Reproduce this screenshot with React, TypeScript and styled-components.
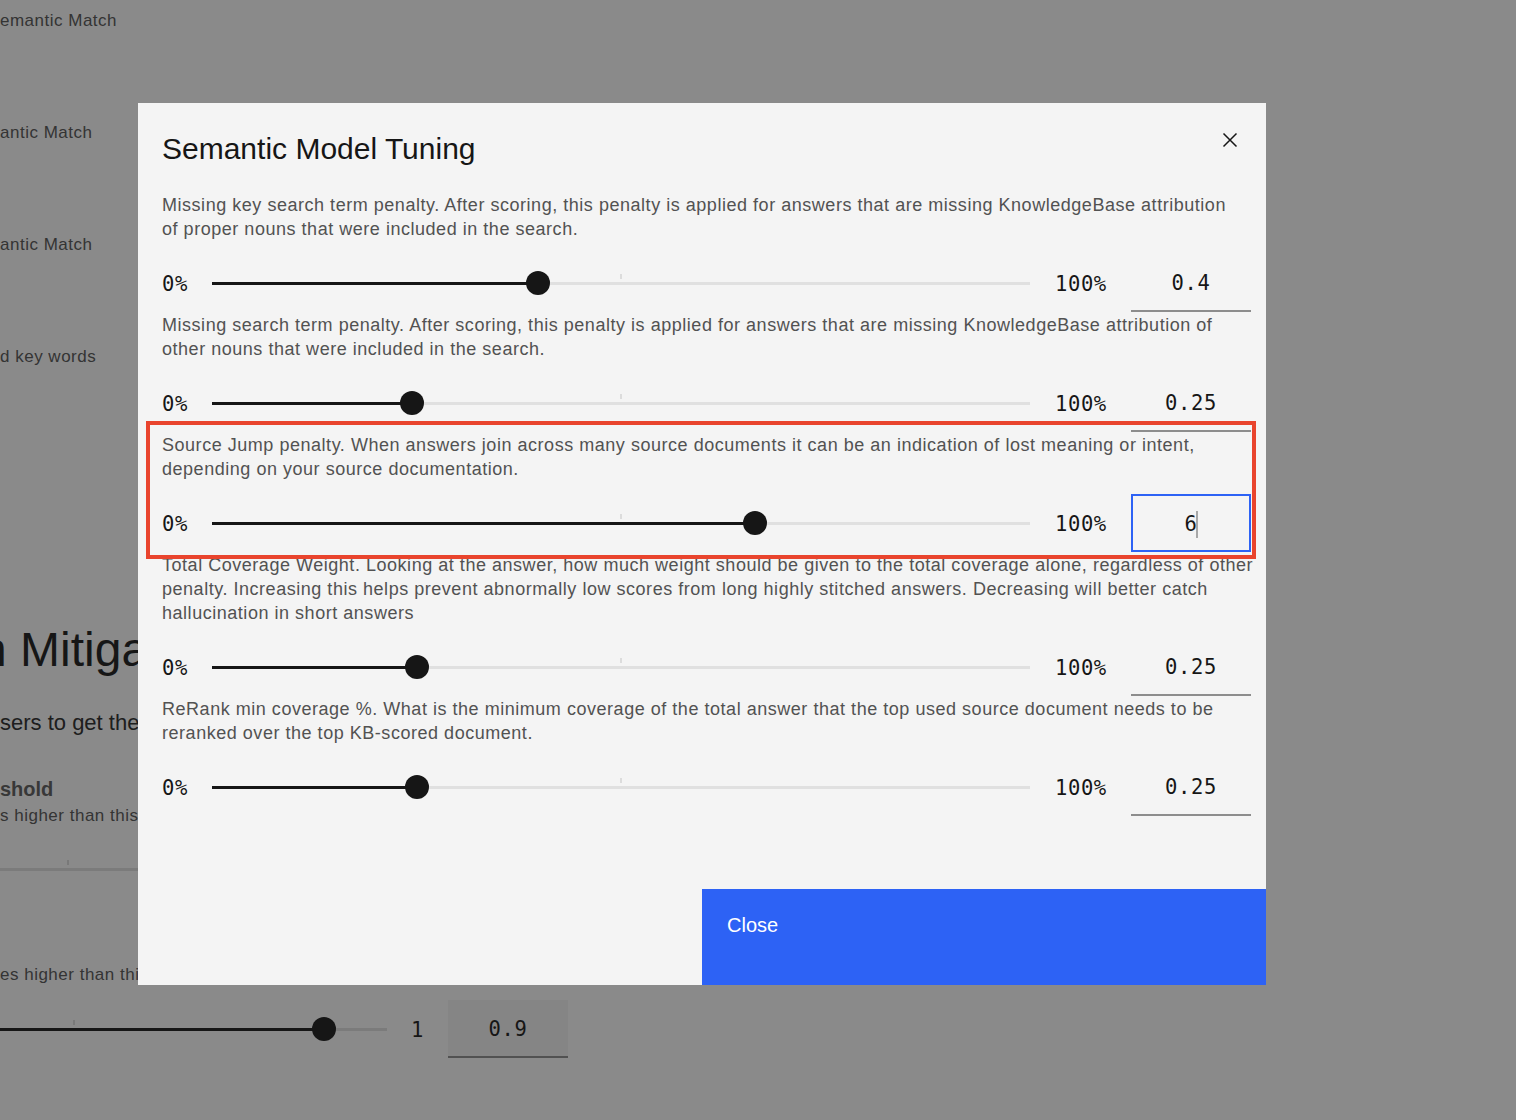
import React from "react";
import styled, { createGlobalStyle, css } from "styled-components";

const sans = `"Liberation Sans", Arial, sans-serif`;
const mono = `"DejaVu Sans Mono", "Liberation Mono", monospace`;

const GlobalStyle = createGlobalStyle`
  html, body {
    margin: 0;
    padding: 0;
    background: #ffffff;
  }
  body {
    font-family: ${sans};
    overflow: hidden;
  }
  * {
    box-sizing: border-box;
  }
`;

type Setting = {
  lines: string[];
  value: string;
  pct: number;
  focused?: boolean;
};

const settings: Setting[] = [
  {
    lines: [
      "Missing key search term penalty. After scoring, this penalty is applied for answers that are missing KnowledgeBase attribution",
      "of proper nouns that were included in the search.",
    ],
    value: "0.4",
    pct: 0.399,
  },
  {
    lines: [
      "Missing search term penalty. After scoring, this penalty is applied for answers that are missing KnowledgeBase attribution of",
      "other nouns that were included in the search.",
    ],
    value: "0.25",
    pct: 0.245,
  },
  {
    lines: [
      "Source Jump penalty. When answers join across many source documents it can be an indication of lost meaning or intent,",
      "depending on your source documentation.",
    ],
    value: "6",
    pct: 0.664,
    focused: true,
  },
  {
    lines: [
      "Total Coverage Weight. Looking at the answer, how much weight should be given to the total coverage alone, regardless of other",
      "penalty. Increasing this helps prevent abnormally low scores from long highly stitched answers. Decreasing will better catch",
      "hallucination in short answers",
    ],
    value: "0.25",
    pct: 0.251,
  },
  {
    lines: [
      "ReRank min coverage %. What is the minimum coverage of the total answer that the top used source document needs to be",
      "reranked over the top KB-scored document.",
    ],
    value: "0.25",
    pct: 0.251,
  },
];

export default function App() {
  return (
    <>
      <GlobalStyle />
      <Page>
        <PageLabel $gap={9}>emantic Match</PageLabel>
        <PageLabel $gap={88}>antic Match</PageLabel>
        <PageLabel $gap={88}>antic Match</PageLabel>
        <PageLabel $gap={88}>d key words</PageLabel>
        <PageHeading>n Mitigation</PageHeading>
        <PageLead>sers to get the</PageLead>
        <PageSubhead>shold</PageSubhead>
        <PageLabel $gap={1}>s higher than this</PageLabel>
        <PageSliderRow $gap={29} $height={24}>
          <Track $width={626} $offset={-245} />
        </PageSliderRow>
        <PageLabel $gap={82}>es higher than this</PageLabel>
        <PageSliderRow $gap={13} $height={58}>
          <Track $width={626} $offset={-239}>
            <Filled style={{ width: "89.9%" }} />
            <Thumb style={{ left: "89.9%" }} />
          </Track>
          <RangeLabel $width={13} $left={24}>
            1
          </RangeLabel>
          <ValueBox $left={24} $filled>
            0.9
          </ValueBox>
        </PageSliderRow>
      </Page>

      <Overlay>
        <Modal role="dialog" aria-label="Semantic Model Tuning">
          <Header>
            <Title>Semantic Model Tuning</Title>
            <IconButton aria-label="Close">
              <svg width="16" height="16" viewBox="0 0 16 16" fill="none">
                <path
                  d="M1.5 1.5 L14.5 14.5 M14.5 1.5 L1.5 14.5"
                  stroke="#161616"
                  strokeWidth="1.5"
                />
              </svg>
            </IconButton>
          </Header>

          <Body>
            {settings.map((s, i) => (
              <SettingBlock key={i} $highlight={s.focused}>
                <Description>
                  {s.lines.map((line) => (
                    <Line key={line}>{line}</Line>
                  ))}
                </Description>
                <SliderRow>
                  <RangeLabel $width={50}>0%</RangeLabel>
                  <Track $width={818}>
                    <Filled style={{ width: `${s.pct * 100}%` }} />
                    <Thumb style={{ left: `${s.pct * 100}%` }} />
                  </Track>
                  <RangeLabel $width={51} $left={25}>
                    100%
                  </RangeLabel>
                  <ValueBox $left={25} $focused={s.focused}>
                    {s.value}
                    {s.focused && <Caret />}
                  </ValueBox>
                </SliderRow>
              </SettingBlock>
            ))}
          </Body>

          <Footer>
            <CloseButton>Close</CloseButton>
          </Footer>
        </Modal>
      </Overlay>
    </>
  );
}

/* page behind the dialog */

const Page = styled.div`
  width: 1516px;
  height: 1120px;
  overflow: hidden;
  background: #ffffff;
  display: flex;
  flex-direction: column;
  align-items: flex-start;
`;

const PageLabel = styled.div<{ $gap: number }>`
  margin-top: ${(p) => p.$gap}px;
  font-size: 17px;
  line-height: 24px;
  letter-spacing: 0.5px;
  color: #525252;
  white-space: nowrap;
`;

const PageHeading = styled.h1`
  margin: 253px 0 0 -20px;
  font-size: 48px;
  line-height: 56px;
  font-weight: 400;
  color: #161616;
  white-space: nowrap;
`;

const PageLead = styled.p`
  margin: 30px 0 0;
  font-size: 22px;
  line-height: 30px;
  color: #262626;
  white-space: nowrap;
`;

const PageSubhead = styled.h3`
  margin: 37px 0 0;
  font-size: 20px;
  line-height: 28px;
  font-weight: 700;
  color: #5a5a5a;
  white-space: nowrap;
`;

const PageSliderRow = styled.div<{ $gap: number; $height: number }>`
  margin-top: ${(p) => p.$gap}px;
  height: ${(p) => p.$height}px;
  display: flex;
  align-items: center;
`;

/* dialog */

const Overlay = styled.div`
  position: fixed;
  inset: 0;
  background: rgba(22, 22, 22, 0.5);
  padding: 103px 0 0 138px;
`;

const Modal = styled.div`
  width: 1128px;
  height: 882px;
  background: #f4f4f4;
  display: flex;
  flex-direction: column;
`;

const Header = styled.header`
  display: flex;
  justify-content: space-between;
  align-items: flex-start;
  padding: 26px 20px 0 24px;
`;

const Title = styled.h2`
  margin: 0;
  font-size: 30px;
  line-height: 40px;
  font-weight: 400;
  color: #161616;
`;

const IconButton = styled.button`
  width: 32px;
  height: 32px;
  margin-top: -5px;
  padding: 0;
  border: none;
  background: transparent;
  display: flex;
  align-items: center;
  justify-content: center;
  cursor: pointer;
`;

const Body = styled.div`
  margin-top: 23px;
  padding: 0 15px 0 24px;
  display: flex;
  flex-direction: column;
`;

const SettingBlock = styled.section<{ $highlight?: boolean }>`
  position: relative;

  ${(p) =>
    p.$highlight &&
    css`
      &::after {
        content: "";
        position: absolute;
        inset: -11px -5px -7px -16px;
        border: 4px solid #e9442d;
        pointer-events: none;
        z-index: 2;
      }
    `}
`;

const Description = styled.p`
  margin: 0;
  padding-top: 1px;
  font-size: 18px;
  line-height: 24px;
  letter-spacing: 0.53px;
  color: #525252;
`;

const Line = styled.span`
  display: block;
  white-space: nowrap;
`;

const SliderRow = styled.div`
  margin-top: 13px;
  height: 58px;
  display: flex;
  align-items: center;
`;

const RangeLabel = styled.span<{ $width: number; $left?: number }>`
  flex-shrink: 0;
  width: ${(p) => p.$width}px;
  margin-left: ${(p) => p.$left ?? 0}px;
  padding-top: 2px;
  font-family: ${mono};
  font-size: 20.5px;
  line-height: 24px;
  letter-spacing: 0.6px;
  color: #161616;
  white-space: nowrap;
`;

const Track = styled.div<{ $width: number; $offset?: number }>`
  position: relative;
  flex-shrink: 0;
  width: ${(p) => p.$width}px;
  margin-left: ${(p) => p.$offset ?? 0}px;
  height: 3px;
  background: #e0e0e0;

  &::before {
    content: "";
    position: absolute;
    left: 50%;
    top: -8px;
    width: 2px;
    height: 5px;
    margin-left: -1px;
    background: #dcdcdc;
  }
`;

const Filled = styled.div`
  position: absolute;
  left: 0;
  top: 0;
  height: 100%;
  background: #161616;
`;

const Thumb = styled.div`
  position: absolute;
  top: 50%;
  width: 24px;
  height: 24px;
  border-radius: 50%;
  background: #161616;
  transform: translate(-50%, -50%);
`;

const ValueBox = styled.div<{ $left?: number; $focused?: boolean; $filled?: boolean }>`
  flex-shrink: 0;
  width: 120px;
  height: 58px;
  margin-left: ${(p) => p.$left ?? 0}px;
  padding-top: 2px;
  display: flex;
  align-items: center;
  justify-content: center;
  background: ${(p) => (p.$filled ? "#f4f4f4" : "transparent")};
  border-bottom: 2px solid #8d8d8d;
  font-family: ${mono};
  font-size: 20.5px;
  letter-spacing: 0.6px;
  color: #161616;

  ${(p) =>
    p.$focused &&
    css`
      border: 2px solid #2d62f5;
    `}
`;

const Caret = styled.span`
  display: inline-block;
  width: 2px;
  height: 27px;
  margin: 0 -1px 0 -1px;
  background: #a8a8a8;
`;

const Footer = styled.footer`
  margin-top: auto;
  display: flex;
  justify-content: flex-end;
`;

const CloseButton = styled.button`
  width: 564px;
  height: 96px;
  padding: 24px 25px;
  border: none;
  background: #2d62f5;
  color: #ffffff;
  font-family: ${sans};
  font-size: 20px;
  line-height: 24px;
  text-align: left;
  display: flex;
  align-items: flex-start;
  cursor: pointer;
`;
